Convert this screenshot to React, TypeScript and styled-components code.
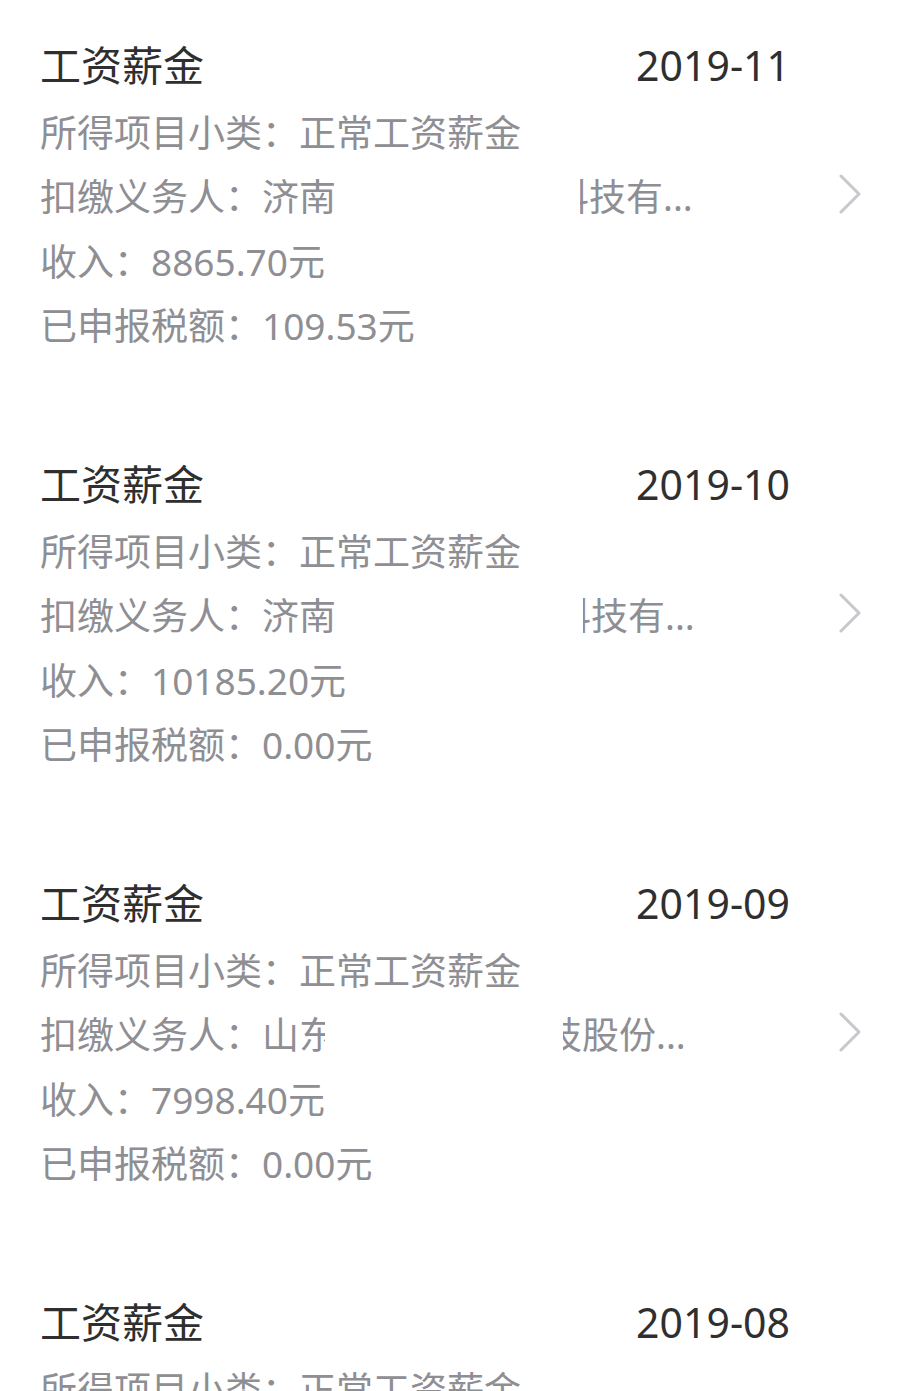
import React from 'react';
import styled, { createGlobalStyle } from 'styled-components';

const GlobalStyle = createGlobalStyle`
  html, body {
    margin: 0;
    padding: 0;
    background: #ffffff;
    overflow: hidden;
  }
  body {
    font-family: "Noto Sans", "Noto Sans CJK SC", sans-serif;
  }
`;

const List = styled.div`
  display: flex;
  flex-direction: column;
  gap: 95.8px;
  padding-top: 35px;
`;

const Item = styled.div`
  display: flex;
  align-items: center;
  gap: 48px;
  padding: 0 46px 0 40px;
`;

const Body = styled.div`
  flex: 1;
  min-width: 0;
`;

const Header = styled.div`
  display: flex;
  justify-content: space-between;
  align-items: center;
  height: 60px;
  margin-bottom: 6px;
  color: #2f2f2f;
`;

const Title = styled.span`
  font-size: 41px;
  line-height: 60px;
`;

const Month = styled.span`
  font-size: 41px;
  line-height: 60px;
`;

const Line = styled.div`
  display: flex;
  font-size: 37px;
  line-height: 64.3px;
  height: 64.3px;
  color: #8e8e93;
  white-space: nowrap;
`;

const Blank = styled.span<{ $w: number }>`
  display: inline-block;
  width: ${(p) => p.$w}px;
`;

// shows only the left part of a glyph
const CutLeft = styled.span<{ $w: number }>`
  display: inline-block;
  width: ${(p) => p.$w}px;
  overflow: hidden;
`;

// shows only the right part of a glyph
const CutRight = styled.span<{ $w: number }>`
  display: inline-flex;
  justify-content: flex-end;
  width: ${(p) => p.$w}px;
  overflow: hidden;

  span {
    flex: none;
  }
`;

const Chevron = styled.svg`
  flex: none;
  width: 24px;
  height: 40px;
  margin-bottom: 6px;
`;

interface Payer {
  head: string;
  headCut?: string;
  headCutW?: number;
  blank: number;
  tailCut: string;
  tailCutW: number;
  tail: string;
}

interface Record {
  month: string;
  payer: Payer;
  income: string;
  tax: string;
}

const records: Record[] = [
  {
    month: '2019-11',
    payer: { head: '济南', blank: 244, tailCut: '科', tailCutW: 9, tail: '技有...' },
    income: '8865.70',
    tax: '109.53',
  },
  {
    month: '2019-10',
    payer: { head: '济南', blank: 247, tailCut: '科', tailCutW: 8, tail: '技有...' },
    income: '10185.20',
    tax: '0.00',
  },
  {
    month: '2019-09',
    payer: { head: '山', headCut: '东', headCutW: 26, blank: 238, tailCut: '技', tailCutW: 19, tail: '股份...' },
    income: '7998.40',
    tax: '0.00',
  },
  {
    month: '2019-08',
    payer: { head: '济南', blank: 244, tailCut: '科', tailCutW: 9, tail: '技有...' },
    income: '8865.70',
    tax: '0.00',
  },
];

const App: React.FC = (): React.ReactElement => {
  return (
    <>
      <GlobalStyle />
      <List>
        {records.map((r) => (
          <Item key={r.month}>
            <Body>
              <Header>
                <Title>工资薪金</Title>
                <Month>{r.month}</Month>
              </Header>
              <Line>所得项目小类：正常工资薪金</Line>
              <Line>
                扣缴义务人：{r.payer.head}
                {r.payer.headCut && <CutLeft $w={r.payer.headCutW || 0}>{r.payer.headCut}</CutLeft>}
                <Blank $w={r.payer.blank} />
                <CutRight $w={r.payer.tailCutW}>
                  <span>{r.payer.tailCut}</span>
                </CutRight>
                {r.payer.tail}
              </Line>
              <Line>收入：{r.income}元</Line>
              <Line>已申报税额：{r.tax}元</Line>
            </Body>
            <Chevron viewBox="0 0 24 40">
              <path d="M3 2 L21 20 L3 38" fill="none" stroke="#c7c7cc" strokeWidth="3" strokeLinecap="round" strokeLinejoin="round" />
            </Chevron>
          </Item>
        ))}
      </List>
    </>
  );
};

export default App;
